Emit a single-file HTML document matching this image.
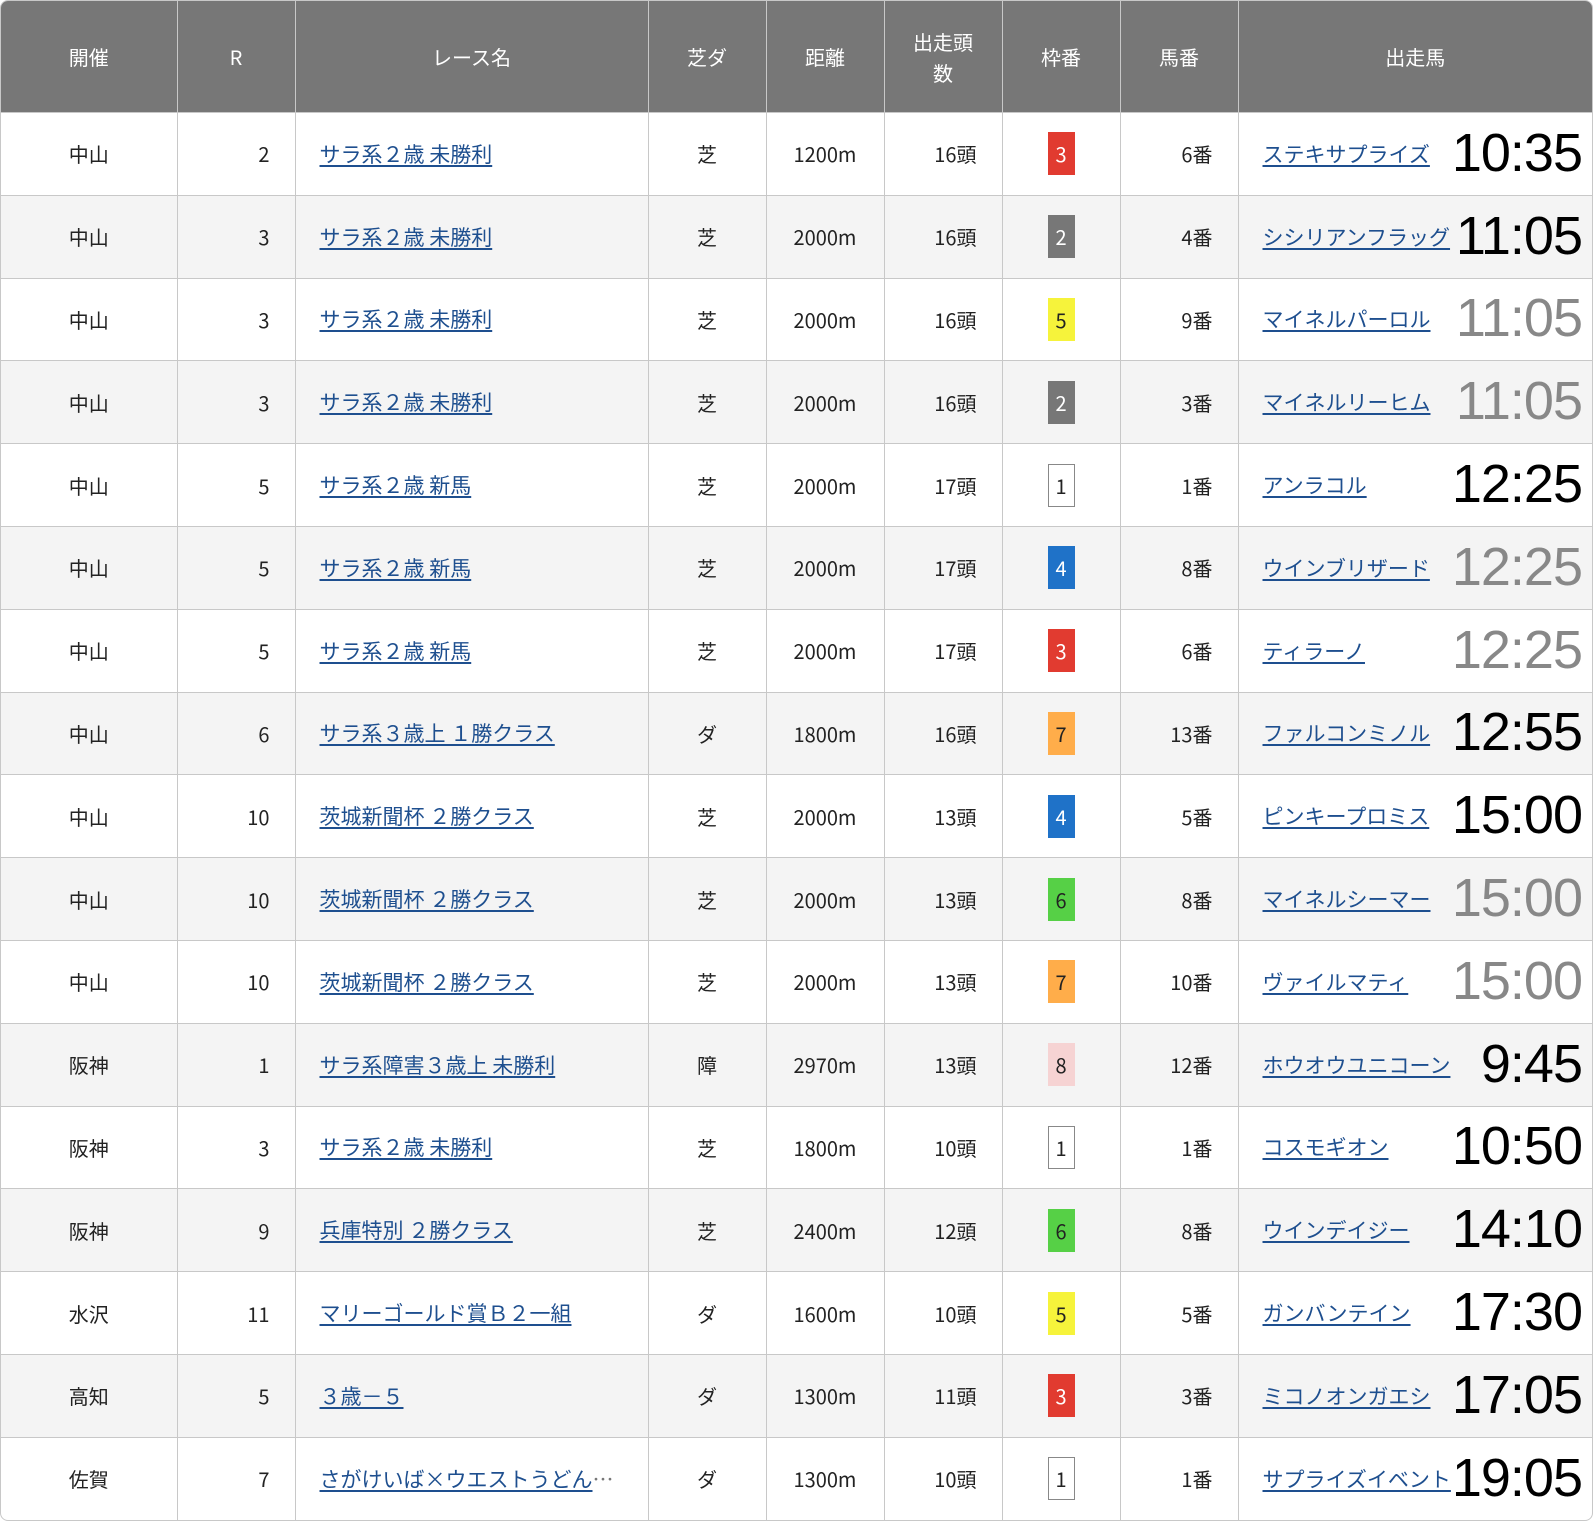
<!DOCTYPE html>
<html><head><meta charset="utf-8">
<style>
html,body{margin:0;padding:0;background:#fff;}
body{width:1593px;height:1520px;overflow:hidden;font-family:"Liberation Sans","Noto Sans CJK JP",sans-serif;}
.wrap{width:1591px;border:1px solid #c8c8c8;border-radius:8px;overflow:hidden;box-sizing:content-box;}
table{border-collapse:collapse;width:1591px;table-layout:fixed;font-family:"Noto Sans CJK JP",sans-serif;font-size:20px;color:#222;}
th{background:#777;color:#fff;font-weight:normal;height:111px;border-left:1px solid #c8c8c8;padding:0 4px;line-height:31px;}
th:first-child,td:first-child{border-left:none;}
td{height:81.8px;border-left:1px solid #c8c8c8;border-top:1px solid #c8c8c8;padding:0;vertical-align:middle;white-space:nowrap;}
tr:nth-child(odd) td{background:#f4f4f4;}
.c{text-align:center;}
.r{text-align:right;padding-right:25px;}
.l{padding-left:24px;}
a{color:#1e4f8f;text-decoration:underline;text-underline-offset:3px;font-size:21px;}
.b{display:inline-block;width:27px;height:43px;line-height:43px;text-align:center;box-sizing:border-box;vertical-align:middle;}
.red{background:#e13b30;color:#fff}.gry{background:#777;color:#fff}.yel{background:#f6f33b;color:#222}
.wht{background:#fff;border:1px solid #888;line-height:41px}.blu{background:#1f72c8;color:#fff}
.org{background:#ffad4a;color:#222}.grn{background:#56d046;color:#222}.pnk{background:#f6d3d3;color:#222}
.h{position:relative;padding-left:24px;}
.t{position:absolute;right:10px;top:50%;transform:translateY(-52%);font-family:"Liberation Sans",sans-serif;font-size:54px;color:#000;letter-spacing:-1px;}
.g{color:#888;}
.ell{color:#777;font-size:21px;}
</style></head><body>
<div class="wrap">
<table>
<colgroup><col style="width:176px"><col style="width:118px"><col style="width:353px"><col style="width:118px"><col style="width:118px"><col style="width:118px"><col style="width:118px"><col style="width:118px"><col></colgroup>
<tr><th>開催</th><th>R</th><th>レース名</th><th>芝ダ</th><th>距離</th><th>出走頭<br>数</th><th>枠番</th><th>馬番</th><th>出走馬</th></tr>
<tr><td class="c">中山</td><td class="r">2</td><td class="l"><a>サラ系２歳 未勝利</a></td><td class="c">芝</td><td class="c">1200m</td><td class="r">16頭</td><td class="c"><span class="b red">3</span></td><td class="r">6番</td><td class="h"><a>ステキサプライズ</a><span class="t">10:35</span></td></tr>
<tr><td class="c">中山</td><td class="r">3</td><td class="l"><a>サラ系２歳 未勝利</a></td><td class="c">芝</td><td class="c">2000m</td><td class="r">16頭</td><td class="c"><span class="b gry">2</span></td><td class="r">4番</td><td class="h"><a>シシリアンフラッグ</a><span class="t">11:05</span></td></tr>
<tr><td class="c">中山</td><td class="r">3</td><td class="l"><a>サラ系２歳 未勝利</a></td><td class="c">芝</td><td class="c">2000m</td><td class="r">16頭</td><td class="c"><span class="b yel">5</span></td><td class="r">9番</td><td class="h"><a>マイネルパーロル</a><span class="t g">11:05</span></td></tr>
<tr><td class="c">中山</td><td class="r">3</td><td class="l"><a>サラ系２歳 未勝利</a></td><td class="c">芝</td><td class="c">2000m</td><td class="r">16頭</td><td class="c"><span class="b gry">2</span></td><td class="r">3番</td><td class="h"><a>マイネルリーヒム</a><span class="t g">11:05</span></td></tr>
<tr><td class="c">中山</td><td class="r">5</td><td class="l"><a>サラ系２歳 新馬</a></td><td class="c">芝</td><td class="c">2000m</td><td class="r">17頭</td><td class="c"><span class="b wht">1</span></td><td class="r">1番</td><td class="h"><a>アンラコル</a><span class="t">12:25</span></td></tr>
<tr><td class="c">中山</td><td class="r">5</td><td class="l"><a>サラ系２歳 新馬</a></td><td class="c">芝</td><td class="c">2000m</td><td class="r">17頭</td><td class="c"><span class="b blu">4</span></td><td class="r">8番</td><td class="h"><a>ウインブリザード</a><span class="t g">12:25</span></td></tr>
<tr><td class="c">中山</td><td class="r">5</td><td class="l"><a>サラ系２歳 新馬</a></td><td class="c">芝</td><td class="c">2000m</td><td class="r">17頭</td><td class="c"><span class="b red">3</span></td><td class="r">6番</td><td class="h"><a>ティラーノ</a><span class="t g">12:25</span></td></tr>
<tr><td class="c">中山</td><td class="r">6</td><td class="l"><a>サラ系３歳上 １勝クラス</a></td><td class="c">ダ</td><td class="c">1800m</td><td class="r">16頭</td><td class="c"><span class="b org">7</span></td><td class="r">13番</td><td class="h"><a>ファルコンミノル</a><span class="t">12:55</span></td></tr>
<tr><td class="c">中山</td><td class="r">10</td><td class="l"><a>茨城新聞杯 ２勝クラス</a></td><td class="c">芝</td><td class="c">2000m</td><td class="r">13頭</td><td class="c"><span class="b blu">4</span></td><td class="r">5番</td><td class="h"><a>ピンキープロミス</a><span class="t">15:00</span></td></tr>
<tr><td class="c">中山</td><td class="r">10</td><td class="l"><a>茨城新聞杯 ２勝クラス</a></td><td class="c">芝</td><td class="c">2000m</td><td class="r">13頭</td><td class="c"><span class="b grn">6</span></td><td class="r">8番</td><td class="h"><a>マイネルシーマー</a><span class="t g">15:00</span></td></tr>
<tr><td class="c">中山</td><td class="r">10</td><td class="l"><a>茨城新聞杯 ２勝クラス</a></td><td class="c">芝</td><td class="c">2000m</td><td class="r">13頭</td><td class="c"><span class="b org">7</span></td><td class="r">10番</td><td class="h"><a>ヴァイルマティ</a><span class="t g">15:00</span></td></tr>
<tr><td class="c">阪神</td><td class="r">1</td><td class="l"><a>サラ系障害３歳上 未勝利</a></td><td class="c">障</td><td class="c">2970m</td><td class="r">13頭</td><td class="c"><span class="b pnk">8</span></td><td class="r">12番</td><td class="h"><a>ホウオウユニコーン</a><span class="t">9:45</span></td></tr>
<tr><td class="c">阪神</td><td class="r">3</td><td class="l"><a>サラ系２歳 未勝利</a></td><td class="c">芝</td><td class="c">1800m</td><td class="r">10頭</td><td class="c"><span class="b wht">1</span></td><td class="r">1番</td><td class="h"><a>コスモギオン</a><span class="t">10:50</span></td></tr>
<tr><td class="c">阪神</td><td class="r">9</td><td class="l"><a>兵庫特別 ２勝クラス</a></td><td class="c">芝</td><td class="c">2400m</td><td class="r">12頭</td><td class="c"><span class="b grn">6</span></td><td class="r">8番</td><td class="h"><a>ウインデイジー</a><span class="t">14:10</span></td></tr>
<tr><td class="c">水沢</td><td class="r">11</td><td class="l"><a>マリーゴールド賞Ｂ２一組</a></td><td class="c">ダ</td><td class="c">1600m</td><td class="r">10頭</td><td class="c"><span class="b yel">5</span></td><td class="r">5番</td><td class="h"><a>ガンバンテイン</a><span class="t">17:30</span></td></tr>
<tr><td class="c">高知</td><td class="r">5</td><td class="l"><a>３歳－５</a></td><td class="c">ダ</td><td class="c">1300m</td><td class="r">11頭</td><td class="c"><span class="b red">3</span></td><td class="r">3番</td><td class="h"><a>ミコノオンガエシ</a><span class="t">17:05</span></td></tr>
<tr><td class="c">佐賀</td><td class="r">7</td><td class="l"><a>さがけいば×ウエストうどん</a><span class="ell">…</span></td><td class="c">ダ</td><td class="c">1300m</td><td class="r">10頭</td><td class="c"><span class="b wht">1</span></td><td class="r">1番</td><td class="h"><a>サプライズイベント</a><span class="t">19:05</span></td></tr>
</table>
</div>
</body></html>
